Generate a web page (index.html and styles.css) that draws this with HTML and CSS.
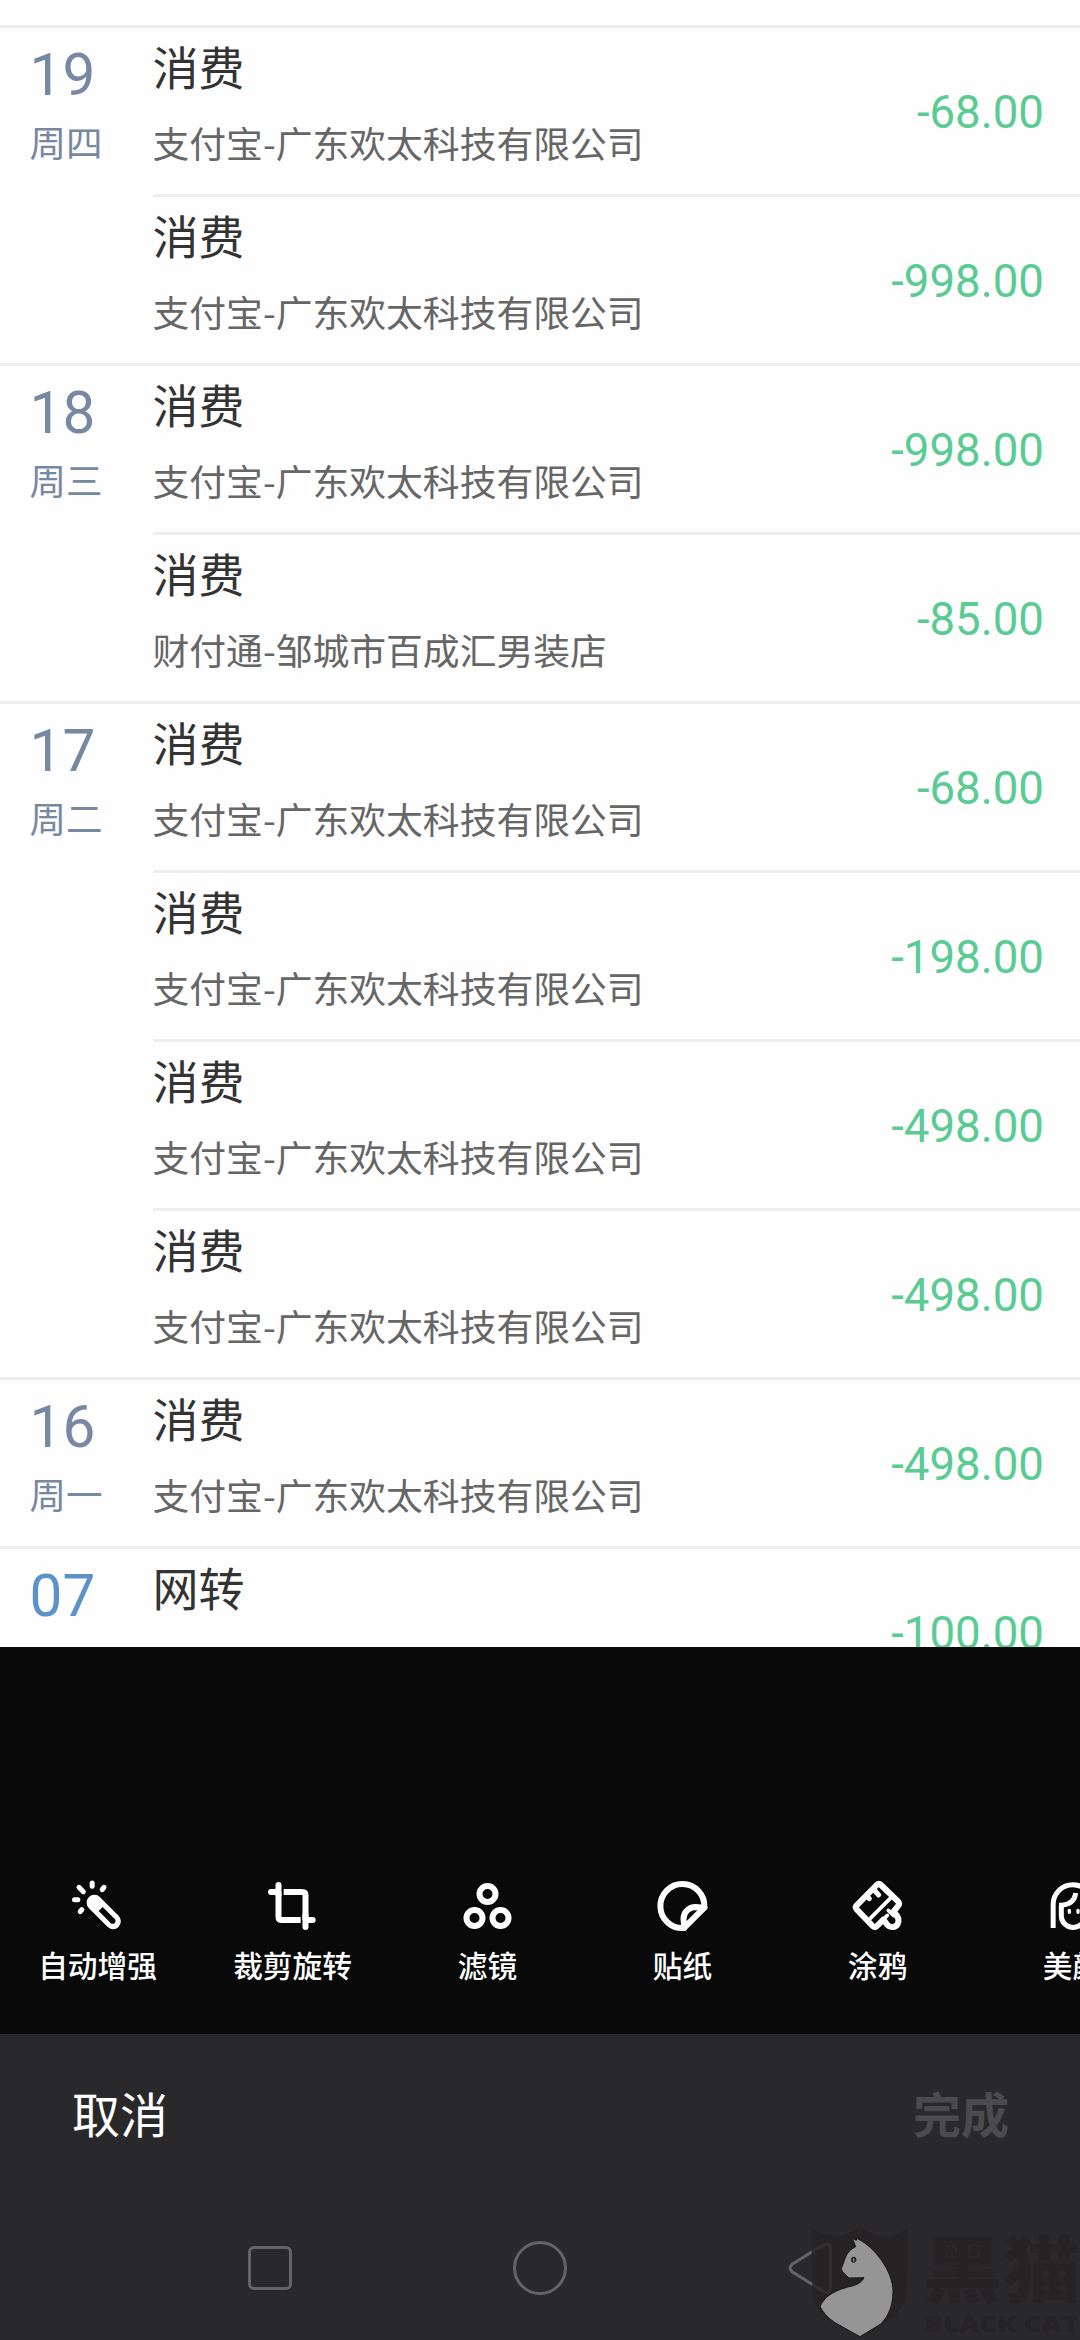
FILE: index.html
```html
<!DOCTYPE html>
<html lang="zh-CN">
<head>
    <meta charset="UTF-8">
    <meta name="viewport" content="width=device-width, initial-scale=1.0">
    <title>编辑图片</title>
    <link rel="stylesheet" href="styles.css">
</head>
<body>
    <div class="screen">
        <div class="photo">
            <div class="day">
                <div class="date"><div class="num">19</div><div class="week">周四</div></div>
                <div class="entries">
                    <div class="entry"><div><div class="title">消费</div><div class="desc">支付宝-广东欢太科技有限公司</div></div><div class="amount">-68.00</div></div>
                    <div class="entry"><div><div class="title">消费</div><div class="desc">支付宝-广东欢太科技有限公司</div></div><div class="amount">-998.00</div></div>
                </div>
            </div>
            <div class="day">
                <div class="date"><div class="num">18</div><div class="week">周三</div></div>
                <div class="entries">
                    <div class="entry"><div><div class="title">消费</div><div class="desc">支付宝-广东欢太科技有限公司</div></div><div class="amount">-998.00</div></div>
                    <div class="entry"><div><div class="title">消费</div><div class="desc">财付通-邹城市百成汇男装店</div></div><div class="amount">-85.00</div></div>
                </div>
            </div>
            <div class="day">
                <div class="date"><div class="num">17</div><div class="week">周二</div></div>
                <div class="entries">
                    <div class="entry"><div><div class="title">消费</div><div class="desc">支付宝-广东欢太科技有限公司</div></div><div class="amount">-68.00</div></div>
                    <div class="entry"><div><div class="title">消费</div><div class="desc">支付宝-广东欢太科技有限公司</div></div><div class="amount">-198.00</div></div>
                    <div class="entry"><div><div class="title">消费</div><div class="desc">支付宝-广东欢太科技有限公司</div></div><div class="amount">-498.00</div></div>
                    <div class="entry"><div><div class="title">消费</div><div class="desc">支付宝-广东欢太科技有限公司</div></div><div class="amount">-498.00</div></div>
                </div>
            </div>
            <div class="day">
                <div class="date"><div class="num">16</div><div class="week">周一</div></div>
                <div class="entries">
                    <div class="entry"><div><div class="title">消费</div><div class="desc">支付宝-广东欢太科技有限公司</div></div><div class="amount">-498.00</div></div>
                </div>
            </div>
            <div class="day">
                <div class="date weekend"><div class="num">07</div></div>
                <div class="entries">
                    <div class="entry"><div><div class="title">网转</div></div><div class="amount">-100.00</div></div>
                </div>
            </div>
        </div>

        <div class="tools">
            <div class="tool">
                <svg viewBox="0 0 180 180">
                    <path class="s15" d="M33 37L46 50M72.500 24V34M108 37L102.500 44M19.500 74H29.500M41.500 104L36.500 110"/>
                    <path class="s46" d="M79.500 83L135 139"/>
                    <path class="slot" d="M98 102L134 138"/>
                    <circle class="hole" cx="134" cy="138" r="8.500"/>
                </svg>
                <span>自动增强</span>
            </div>
            <div class="tool">
                <svg viewBox="0 0 180 180">
                    <path class="s18 butt" d="M46.500 51V125Q46.500 135 56.500 135H113M62 51H117.500Q127.500 51 127.500 61V135"/>
                    <path class="s18" d="M46.500 30V60M24 51H46M127.500 120V156M128 135H149"/>
                </svg>
                <span>裁剪旋转</span>
            </div>
            <div class="tool">
                <svg viewBox="0 0 180 180">
                    <circle class="s18" cx="88.500" cy="57" r="24"/>
                    <circle class="s18" cx="49.500" cy="129" r="24"/>
                    <circle class="s18" cx="127.500" cy="129" r="24"/>
                </svg>
                <span>滤镜</span>
            </div>
            <div class="tool">
                <svg viewBox="0 0 180 180">
                    <path class="s18" d="M154 97A66 66 0 1 0 93 159"/>
                    <path class="s18" d="M154 98L128 96A36 36 0 0 0 91.500 132L94 158Z"/>
                </svg>
                <span>贴纸</span>
            </div>
            <div class="tool">
                <svg viewBox="0 0 180 180">
                    <path class="s18" d="M86 30L26 91Q20 97 26 103L74 153Q80.500 160 87 153L106 134L117 148C127 160 143 158 149 147C155 135 151 124 137 110L150 93Q157 86 150 79L99 30Q92.500 24 86 30Z"/>
                    <path class="s12" d="M63 134L132 65M106 133L118 121M121 106L137 122"/>
                    <path class="s15" d="M76 42L92 60M56 62L64 71"/>
                </svg>
                <span>涂鸦</span>
            </div>
            <div class="tool">
                <svg viewBox="0 0 180 180">
                    <path class="s15 butt" d="M30.500 159V88A59 59 0 0 1 148.500 88V159"/>
                    <path class="s15 butt" d="M55 92V122A35.500 35.500 0 0 0 126 122V92"/>
                    <path class="s15 butt" d="M48 91C80 91 95 78 98 54"/>
                    <path class="s10" d="M79 106V112M105 106V112"/>
                </svg>
                <span>美颜</span>
            </div>
        </div>

        <div class="bottom">
            <div class="actions">
                <div class="cancel">取消</div>
                <div class="done">完成</div>
            </div>
            <div class="nav">
                <div><i class="recent"></i></div>
                <div><i class="home"></i></div>
                <div><svg class="back" viewBox="0 0 54 54"><path d="M6.500 23Q1.500 27 6.500 31L37 50Q44.500 54 44.500 46V8Q44.500 0 37 4Z"/></svg></div>
            </div>
        </div>

        <div class="watermark">
            <svg viewBox="0 0 1020 480">
                <path class="shield" d="M214 144Q250 168 288 168Q330 166 360 136Q390 166 432 168Q470 168 504 144L500 340C496 400 430 440 360 469C290 440 222 400 217 340Z"/>
                <path class="cat" d="M337 175L349 181L350 175L358 179C400 200 459 270 459 335C459 390 435 420 421 433L360 470L283 427Q252 405 240 379C256 345 290 328 340 317Q366 308 372 293L327 294L307 275Q301 265 308 255C316 240 315 215 347 200Z"/>
                <ellipse class="eye" cx="341" cy="239" rx="8" ry="9"/>
                <path class="glint" d="M341 233Q336 240 342 246Q346 239 341 233Z"/>
                <text class="wm-cn" x="550" y="347" textLength="474" lengthAdjust="spacingAndGlyphs">黑猫</text>
                <text class="wm-en" x="554" y="457" textLength="460" lengthAdjust="spacingAndGlyphs">BLACK CAT</text>
            </svg>
        </div>
    </div>
</body>
</html>
```
FILE: styles.css
```css
* {
    box-sizing: border-box;
}
body {
    margin: 0;
    background: #090909;
    font-family: Roboto, "Noto Sans CJK SC", sans-serif;
}
.screen {
    position: relative;
    width: 1080px;
    height: 2340px;
    overflow: hidden;
}

/* bill list */
.photo {
    height: 1647px;
    padding-top: 25px;
    background: #fefefe;
    overflow: hidden;
}
.day {
    display: flex;
    border-top: 3px solid #eee;
}
.date {
    width: 152.500px;
    padding: 12px 0 0 29.500px;
    color: #7788a2;
}
.weekend {
    color: #5b92c8;
}
.num {
    font-size: 58.500px;
    line-height: 70px;
}
.week {
    margin-top: 10px;
    font-size: 36.500px;
    line-height: 50px;
}
.entries {
    flex: 1;
}
.entry {
    display: flex;
    justify-content: space-between;
    height: 166px;
    padding: 10px 36px 0 0;
}
.entry + .entry {
    height: 169px;
    border-top: 3px solid #eee;
}
.title {
    font-size: 46px;
    line-height: 62px;
    color: #333;
}
.desc {
    margin-top: 17px;
    font-size: 36.800px;
    line-height: 50px;
    color: #666;
    font-family: "Noto Sans CJK SC", sans-serif;
}
.amount {
    padding-top: 48px;
    font-size: 45.600px;
    line-height: 54px;
    color: #5bcb94;
}

/* edit tools */
.tools {
    display: flex;
    height: 387px;
    padding-top: 228px;
    background: #090909;
    overflow: hidden;
}
.tool {
    display: flex;
    flex: 0 0 195px;
    flex-direction: column;
    align-items: center;
    color: #fff;
    font-size: 29.700px;
    line-height: 40px;
    font-weight: 500;
    white-space: nowrap;
}
.tool svg {
    width: 60px;
    height: 60px;
    margin-bottom: 12px;
    fill: none;
    stroke: #fff;
    stroke-linecap: round;
    stroke-linejoin: round;
}
.tool .s10 { stroke-width: 10; }
.tool .s12 { stroke-width: 11; }
.tool .s15 { stroke-width: 15; }
.tool .s18 { stroke-width: 18; }
.tool .s46 { stroke-width: 47; }
.tool .butt {
    stroke-linecap: butt;
}
.tool .slot {
    stroke: #090909;
    stroke-width: 17;
    stroke-linecap: butt;
}
.tool .hole {
    fill: #090909;
    stroke: none;
}

/* bottom bar */
.bottom {
    height: 306px;
    background: #29292b;
}
.actions {
    display: flex;
    justify-content: space-between;
    height: 162px;
    padding: 50px 71px 0 72px;
    font-size: 48px;
    line-height: 65px;
}
.cancel {
    color: #fff;
}
.done {
    color: #4b4b4d;
    font-weight: 700;
}
.nav {
    display: flex;
    height: 144px;
    padding: 0 135px;
}
.nav div {
    display: flex;
    width: 270px;
    height: 144px;
    align-items: center;
    justify-content: center;
}
.recent {
    width: 44px;
    height: 44px;
    border: 3px solid #646465;
    border-radius: 6px;
}
.home {
    width: 54px;
    height: 54px;
    border: 3px solid #646465;
    border-radius: 50%;
}
.back {
    width: 54px;
    height: 54px;
    margin-left: 6px;
    fill: none;
    stroke: #646465;
    stroke-width: 3;
}

.watermark {
    position: absolute;
    right: 0;
    bottom: 0;
    width: 340px;
    height: 160px;
}
.watermark svg {
    display: block;
    width: 340px;
    height: 160px;
}
.shield {
    fill: #252223;
    fill-opacity: 0.8;
}
.cat {
    fill: #959595;
    stroke: #171516;
    stroke-width: 3;
}
.eye {
    fill: #262425;
}
.glint {
    fill: #959595;
}
.wm-cn {
    font: 900 216px "Noto Sans CJK SC", sans-serif;
    fill: #252324;
}
.wm-en {
    font: 900 68px "Open Sans", sans-serif;
    fill: #252324;
}
```
